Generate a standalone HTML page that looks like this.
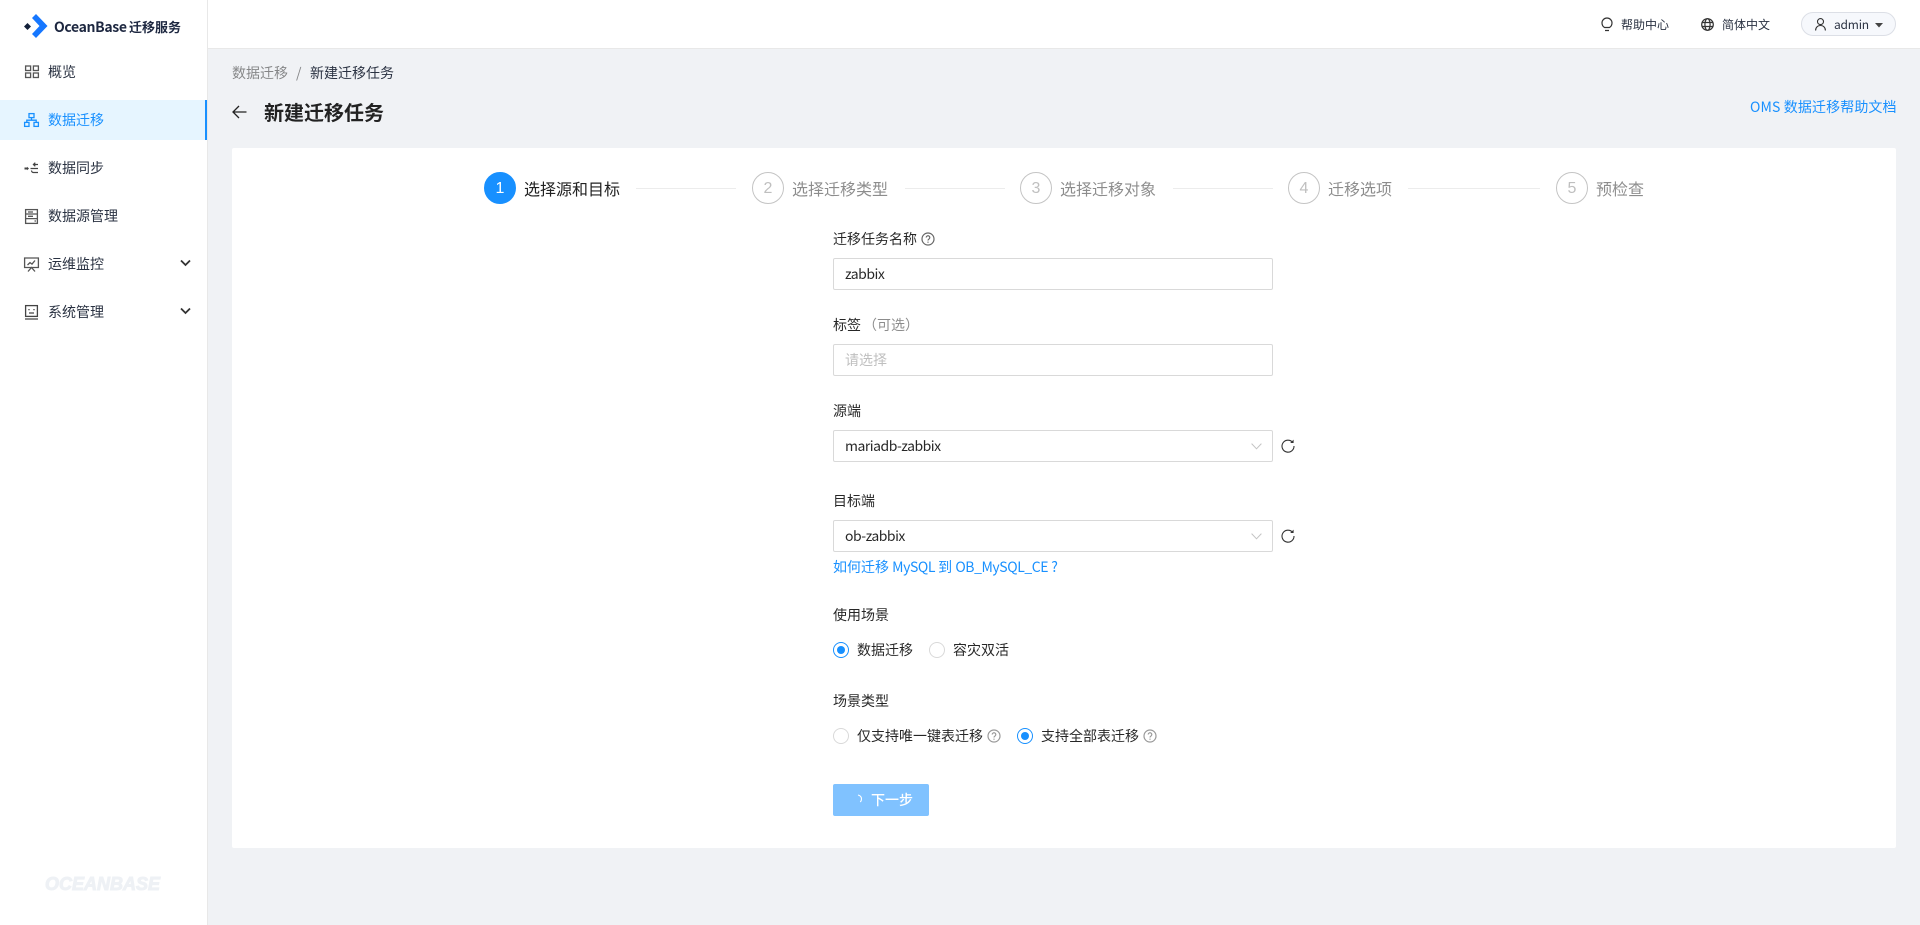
<!DOCTYPE html>
<html lang="zh-CN"><head><meta charset="utf-8"><title>新建迁移任务</title>
<style>
*{box-sizing:border-box}
html,body{margin:0;padding:0;width:1920px;height:925px;overflow:hidden;background:#f0f2f5}
body{position:relative;font-family:"Noto Sans CJK SC","Liberation Sans",sans-serif;font-size:14px;color:rgba(0,0,0,.85)}
.a{position:absolute}
.t{position:absolute;white-space:nowrap;line-height:22px;height:22px}
.m{color:#2a3242}
.g{color:rgba(0,0,0,.45)}
.b{color:#1890ff}
.i{position:absolute;left:833px;width:440px;height:32px;background:#fff;border:1px solid #d9d9d9;border-radius:2px;padding-left:11px;line-height:31px;letter-spacing:-.5px}
.c{position:absolute;top:172px;width:32px;height:32px;border-radius:50%;border:1px solid #c4c4c4;color:#bfbfbf;text-align:center;line-height:32px;font-size:16px;font-family:"Liberation Sans",sans-serif}
.l{position:absolute;top:188px;height:1px;background:#ececec}
.r{position:absolute;width:16px;height:16px;border-radius:50%;border:1px solid #d9d9d9;background:#fff}
.r.on{border-color:#1890ff}
.r.on:after{content:"";position:absolute;left:3px;top:3px;width:8px;height:8px;border-radius:50%;background:#1890ff}
.n{letter-spacing:-.42px}
svg{position:absolute;overflow:visible}
</style></head><body>

<div class="a" style="left:0;top:0;width:208px;height:925px;background:#fff;border-right:1px solid #e8e8e8"></div>
<div class="a" style="left:208px;top:0;width:1712px;height:49px;background:#fff;border-bottom:1px solid #e8e8e8"></div>

<svg style="left:24px;top:14px" width="24" height="24" viewBox="0 0 24 24"><path d="M0 12.500 3.500 9 7 12.500 3.500 16z" fill="#132039"/><path d="M8 4 12 0 23.500 12 12 24 8 20 15.500 12z" fill="#1677ff"/></svg>
<div class="t" style="left:54px;top:16px;font-size:14px;font-weight:700;color:#1d2740;letter-spacing:-.35px">OceanBase</div>
<div class="t" style="left:129px;top:16px;font-size:13px;font-weight:700;color:#1d2740">迁移服务</div>

<div class="a" style="left:0;top:100px;width:207px;height:40px;background:#e6f5ff;border-right:2px solid #1890ff"></div>
<div class="t m" style="left:48px;top:61px">概览</div>
<div class="t b" style="left:48px;top:109px">数据迁移</div>
<div class="t m" style="left:48px;top:157px">数据同步</div>
<div class="t m" style="left:48px;top:205px">数据源管理</div>
<div class="t m" style="left:48px;top:253px">运维监控</div>
<div class="t m" style="left:48px;top:301px">系统管理</div>

<svg style="left:25px;top:65px" width="14" height="14" viewBox="0 0 14 14" fill="none" stroke="#555" stroke-width="1.300"><rect x=".6" y="1" width="5" height="4.500"/><rect x="8.400" y="1" width="5" height="4.500"/><rect x=".6" y="8" width="5" height="4.500"/><rect x="8.400" y="8" width="5" height="4.500"/></svg>
<svg style="left:24px;top:113px" width="15" height="14" viewBox="0 0 15 14" fill="none" stroke="#1890ff" stroke-width="1.300"><rect x="5" y=".6" width="5" height="4"/><rect x=".6" y="9.400" width="4.400" height="4"/><rect x="10" y="9.400" width="4.400" height="4"/><path d="M7.500 4.600v2.600M2.800 9.400V7.200h9.400v2.200"/></svg>
<svg style="left:24px;top:162px" width="15" height="13" viewBox="0 0 15 13" fill="none" stroke="#444" stroke-width="1.200"><path d="M14 2.500H9.500M11.300.7 9.400 2.500l1.900 1.800M6.500 6.500H14M14 10.500H9.500a2 2 0 0 1-2-2"/><path d="M.5 6.500H3" stroke-width="2"/><path d="M3 4.700v3.600L5 6.500z" fill="#444" stroke="none"/></svg>
<svg style="left:25px;top:209px" width="13" height="15" viewBox="0 0 13 15" fill="none" stroke="#555" stroke-width="1.300"><rect x=".6" y=".6" width="11.800" height="13.800"/><path d="M.6 5h11.800M.6 9.600h11.800M3 3h5M3 7.300h5M9.500 12h1.500"/></svg>
<svg style="left:24px;top:257px" width="15" height="15" viewBox="0 0 15 15" fill="none" stroke="#555" stroke-width="1.300"><path d="M.6 1h13.800v9.500H.6zM4 14.500l3.500-4 3.500 4M3.500 8l2.500-2.400 2 1.500L11 3.500"/></svg>
<svg style="left:25px;top:305px" width="13" height="15" viewBox="0 0 13 15" fill="none" stroke="#444" stroke-width="1.300"><rect x=".6" y=".6" width="11.800" height="10.800"/><path d="M0 14h13M4 4v1.200M9 4v1.200M4 8h5"/></svg>
<svg style="left:180px;top:259px" width="11" height="8" viewBox="0 0 11 8" fill="none" stroke="#333" stroke-width="1.800"><path d="M1 1.500 5.500 6 10 1.500"/></svg>
<svg style="left:180px;top:307px" width="11" height="8" viewBox="0 0 11 8" fill="none" stroke="#333" stroke-width="1.800"><path d="M1 1.500 5.500 6 10 1.500"/></svg>

<div class="t" style="left:45px;top:872px;height:24px;line-height:24px;font-family:'Liberation Sans',sans-serif;font-weight:700;font-style:italic;font-size:18px;color:#eef1f5;letter-spacing:0;-webkit-text-stroke:1px #eef1f5">OCEANBASE</div>

<svg style="left:1601px;top:17px" width="12" height="15" viewBox="0 0 12 15" fill="none" stroke="#333" stroke-width="1.200"><path d="M3.500 10.500C1.800 9.400 1 8 1 6a5 5 0 0 1 10 0c0 2-.8 3.400-2.500 4.500zM4 13.500h4"/></svg>
<div class="t m" style="left:1621px;top:14px;font-size:12px">帮助中心</div>
<svg style="left:1701px;top:18px" width="13" height="13" viewBox="0 0 13 13" fill="none" stroke="#333" stroke-width="1.200"><circle cx="6.500" cy="6.500" r="5.800"/><ellipse cx="6.500" cy="6.500" rx="2.600" ry="5.800"/><path d="M.8 4.500h11.400M.8 8.500h11.400"/></svg>
<div class="t m" style="left:1722px;top:14px;font-size:12px">简体中文</div>
<div class="a" style="left:1801px;top:12px;width:95px;height:24px;border:1px solid #dcdfe6;border-radius:12px;background:#f6f8fc"></div>
<svg style="left:1815px;top:18px" width="11" height="13" viewBox="0 0 11 13" fill="none" stroke="#333" stroke-width="1.100"><circle cx="5.500" cy="3.600" r="3"/><path d="M.6 12.500c0-3 2-5 4.900-5s4.900 2 4.900 5"/></svg>
<div class="t m" style="left:1834px;top:14px;font-size:12px;letter-spacing:-.2px">admin</div>
<svg style="left:1875px;top:23px" width="8" height="5" viewBox="0 0 8 5"><path d="M0 0h8L4 4.500z" fill="#444"/></svg>

<div class="t g" style="left:232px;top:62px">数据迁移</div>
<div class="t g" style="left:296px;top:62px">/</div>
<div class="t m" style="left:310px;top:62px">新建迁移任务</div>
<svg style="left:232px;top:105px" width="15" height="14" viewBox="0 0 15 14" fill="none" stroke="#222" stroke-width="1.300"><path d="M14.500 7H1M7 1 1 7l6 6"/></svg>
<div class="t" style="left:264px;top:97px;height:30px;line-height:30px;font-size:20px;font-weight:700;color:#222">新建迁移任务</div>
<div class="t b" style="left:1750px;top:96px;letter-spacing:.12px">OMS 数据迁移帮助文档</div>

<div class="a" style="left:232px;top:148px;width:1664px;height:700px;background:#fff;border-radius:2px"></div>

<div class="c" style="left:484px;background:#1890ff;border-color:#1890ff;color:#fff">1</div>
<div class="t" style="left:524px;top:177px;font-size:16px;color:#222">选择源和目标</div>
<div class="l" style="left:636px;width:100px"></div>
<div class="c" style="left:752px">2</div>
<div class="t g" style="left:792px;top:177px;font-size:16px">选择迁移类型</div>
<div class="l" style="left:905px;width:100px"></div>
<div class="c" style="left:1020px">3</div>
<div class="t g" style="left:1060px;top:177px;font-size:16px">选择迁移对象</div>
<div class="l" style="left:1173px;width:100px"></div>
<div class="c" style="left:1288px">4</div>
<div class="t g" style="left:1328px;top:177px;font-size:16px">迁移选项</div>
<div class="l" style="left:1408px;width:132px"></div>
<div class="c" style="left:1556px">5</div>
<div class="t g" style="left:1596px;top:177px;font-size:16px">预检查</div>

<div class="t" style="left:833px;top:228px">迁移任务名称</div>
<svg style="left:921px;top:232px" width="14" height="14" viewBox="0 0 14 14" fill="none" stroke="#666" stroke-width="1.200"><circle cx="7" cy="7" r="6"/><path d="M5.200 5.500a1.800 1.800 0 1 1 2.700 1.600c-.6.400-.9.700-.9 1.400M7 9.600v1.200"/></svg>
<div class="i" style="top:258px">zabbix</div>

<div class="t" style="left:833px;top:314px">标签</div>
<div class="t g" style="left:863px;top:314px">（可选）</div>
<div class="i" style="top:344px;color:#bfbfbf;letter-spacing:0">请选择</div>

<div class="t" style="left:833px;top:400px">源端</div>
<div class="i" style="top:430px">mariadb-zabbix</div>
<svg style="left:1251px;top:443px" width="11" height="7" viewBox="0 0 11 7" fill="none" stroke="#c4c4c4" stroke-width="1"><path d="M.6.6 5.500 5.800 10.400.6"/></svg>
<svg style="left:1281px;top:439px" width="14" height="14" viewBox="0 0 14 14" fill="none" stroke="#333" stroke-width="1.100"><path d="M11.500 3.200A6 6 0 1 0 13 7"/><path d="M12.600 .6v3.400H9.200z" fill="#333" stroke="none"/></svg>

<div class="t" style="left:833px;top:490px">目标端</div>
<div class="i" style="top:520px">ob-zabbix</div>
<svg style="left:1251px;top:533px" width="11" height="7" viewBox="0 0 11 7" fill="none" stroke="#c4c4c4" stroke-width="1"><path d="M.6.6 5.500 5.800 10.400.6"/></svg>
<svg style="left:1281px;top:529px" width="14" height="14" viewBox="0 0 14 14" fill="none" stroke="#333" stroke-width="1.100"><path d="M11.500 3.200A6 6 0 1 0 13 7"/><path d="M12.600 .6v3.400H9.200z" fill="#333" stroke="none"/></svg>
<div class="t b" style="left:833px;top:556px">如何迁移 <span class="n">MySQL</span> 到 <span class="n">OB_MySQL_CE</span> ?</div>

<div class="t" style="left:833px;top:604px">使用场景</div>
<div class="r on" style="left:833px;top:642px"></div>
<div class="t" style="left:857px;top:639px">数据迁移</div>
<div class="r" style="left:929px;top:642px"></div>
<div class="t" style="left:953px;top:639px">容灾双活</div>

<div class="t" style="left:833px;top:690px">场景类型</div>
<div class="r" style="left:833px;top:728px"></div>
<div class="t" style="left:857px;top:725px">仅支持唯一键表迁移</div>
<svg style="left:987px;top:729px" width="14" height="14" viewBox="0 0 14 14" fill="none" stroke="#999" stroke-width="1.200"><circle cx="7" cy="7" r="6"/><path d="M5.200 5.500a1.800 1.800 0 1 1 2.700 1.600c-.6.400-.9.700-.9 1.400M7 9.600v1.200"/></svg>
<div class="r on" style="left:1017px;top:728px"></div>
<div class="t" style="left:1041px;top:725px">支持全部表迁移</div>
<svg style="left:1143px;top:729px" width="14" height="14" viewBox="0 0 14 14" fill="none" stroke="#999" stroke-width="1.200"><circle cx="7" cy="7" r="6"/><path d="M5.200 5.500a1.800 1.800 0 1 1 2.700 1.600c-.6.400-.9.700-.9 1.400M7 9.600v1.200"/></svg>

<div class="a" style="left:833px;top:784px;width:96px;height:32px;background:#80c2ff;border-radius:2px"></div>
<svg style="left:857px;top:793px" width="10" height="14" viewBox="0 0 10 14" fill="none" stroke="#fff" stroke-width="1.100"><path d="M1 2c2.200.5 3.500 2 3.500 4 0 1.200-.5 2.200-1.200 3"/></svg>
<div class="t" style="left:871px;top:789px;color:#fff;font-weight:500">下一步</div>

</body></html>
